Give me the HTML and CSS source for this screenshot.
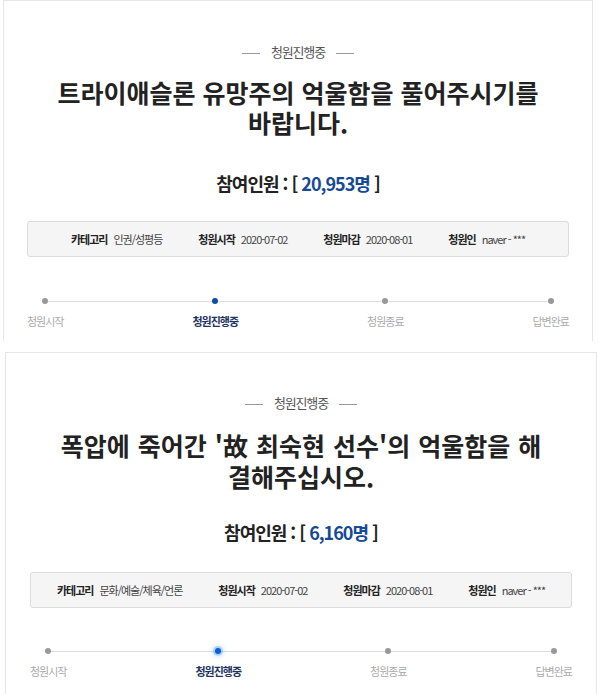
FILE: index.html
```html
<!DOCTYPE html>
<html lang="ko">
<head>
    <meta charset="UTF-8">
    <meta name="viewport" content="width=device-width, initial-scale=1.0">
    <title>청원진행중</title>
    <link rel="stylesheet" href="styles.css">
</head>
<body>
    <div class="petition petition-first">
        <div class="status"><span>청원진행중</span></div>
        <h3 class="petition-title">트라이애슬론 유망주의 억울함을 풀어주시기를 바랍니다.</h3>
        <h2 class="counter">참여인원 : [ <span class="counter-num">20,953명</span> ]</h2>
        <ul class="info">
            <li><strong>카테고리</strong>인권/성평등</li>
            <li><strong>청원시작</strong>2020-07-02</li>
            <li><strong>청원마감</strong>2020-08-01</li>
            <li><strong>청원인</strong>naver - ***</li>
        </ul>
        <ol class="steps">
            <li>청원시작</li>
            <li class="on">청원진행중</li>
            <li>청원종료</li>
            <li>답변완료</li>
        </ol>
    </div>

    <div class="petition petition-second">
        <div class="status"><span>청원진행중</span></div>
        <h3 class="petition-title">폭압에 죽어간 '故 최숙현 선수'의 억울함을 해결해주십시오.</h3>
        <h2 class="counter">참여인원 : [ <span class="counter-num">6,160명</span> ]</h2>
        <ul class="info">
            <li><strong>카테고리</strong>문화/예술/체육/언론</li>
            <li><strong>청원시작</strong>2020-07-02</li>
            <li><strong>청원마감</strong>2020-08-01</li>
            <li><strong>청원인</strong>naver - ***</li>
        </ul>
        <ol class="steps">
            <li>청원시작</li>
            <li class="on">청원진행중</li>
            <li>청원종료</li>
            <li>답변완료</li>
        </ol>
    </div>
</body>
</html>
```

FILE: styles.css
```css
body {
    margin: 0;
    padding: 0;
    background-color: #fff;
    color: #222;
    font-family: 'Noto Sans CJK KR', 'Noto Sans', sans-serif;
}
.petition {
    border: 1px solid #e6e6e6;
    background-color: #fff;
    text-align: center;
    box-sizing: border-box;
}
.petition-first {
    width: 590px;
    height: 341px;
    margin-left: 3px;
    padding: 42px 23px 0;
    border-bottom: none;
}
.petition-second {
    width: 592px;
    height: 342px;
    margin: 11px 0 0 5px;
    padding: 41px 24px 0;
    border-bottom: none;
}
.status {
    font-size: 13px;
    line-height: 18px;
    color: #555;
    letter-spacing: -1.2px;
}
.status span::before,
.status span::after {
    content: '';
    display: inline-block;
    width: 18px;
    height: 1px;
    background-color: #999;
    vertical-align: middle;
    margin: 0 11px;
}
.petition-title {
    max-width: 492px;
    margin: 16px auto 0;
    font-size: 25px;
    line-height: 30px;
    font-weight: bold;
    color: #222;
    word-break: break-all;
}
.petition-second .petition-title {
    margin-top: 18px;
    line-height: 31px;
    word-spacing: 1px;
}
.counter {
    margin: 34px 0 0;
    font-size: 18px;
    line-height: 24px;
    font-weight: bold;
    letter-spacing: -1px;
    color: #222;
}
.petition-second .counter {
    margin-top: 28px;
}
.counter-num {
    color: #164a96;
}
.info {
    display: flex;
    justify-content: center;
    gap: 36px;
    margin: 26px 0 0;
    padding: 0;
    list-style: none;
    height: 36px;
    align-items: center;
    background-color: #f5f5f5;
    border: 1px solid #dcdcdc;
    border-radius: 3px;
    box-sizing: border-box;
    font-size: 11px;
    color: #444;
    letter-spacing: -1px;
}
.petition-second .info {
    margin-top: 28px;
}
.info strong {
    color: #222;
    margin-right: 6px;
}
.steps {
    position: relative;
    display: flex;
    justify-content: space-between;
    margin: 41px 0 0;
    padding: 0;
    list-style: none;
    font-size: 11px;
    line-height: 16px;
    color: #aaa;
    letter-spacing: -1px;
}
.petition-second .steps {
    margin-top: 40px;
}
/* connecting line between the step dots */
.steps::before {
    content: '';
    position: absolute;
    left: 17px;
    right: 17px;
    top: 3px;
    height: 1px;
    background-color: #ddd;
}
.steps li {
    position: relative;
    display: flex;
    flex-direction: column;
    align-items: center;
}
.steps li::before {
    content: '';
    width: 6px;
    height: 6px;
    border-radius: 50%;
    background-color: #999;
    margin-bottom: 9px;
    position: relative;
}
.steps li.on {
    color: #1d3461;
    font-weight: bold;
}
.steps li.on::before {
    background-color: #0d4ea3;
}
.petition-second .steps li.on::before {
    background-color: #0a5fd0;
    box-shadow: 0 0 0 2px rgba(30, 120, 230, 0.25), 0 0 5px 3px rgba(30, 120, 230, 0.18);
}
```
